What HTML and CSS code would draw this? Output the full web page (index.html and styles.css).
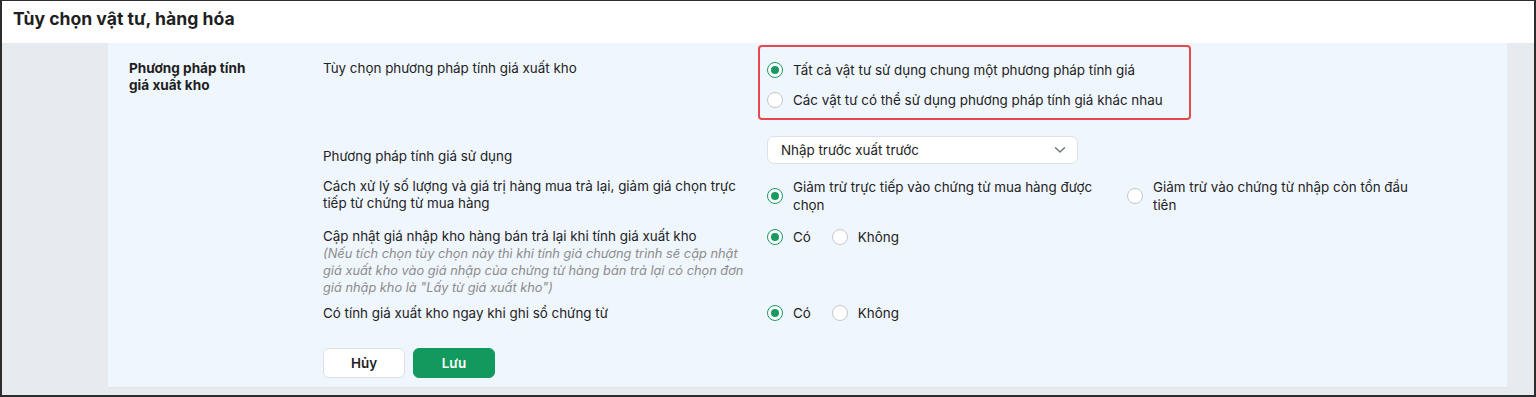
FILE: index.html
```html
<!DOCTYPE html>
<html>
<head>
    <meta charset="UTF-8">
    <title>Tùy chọn vật tư, hàng hóa</title>
    <link rel="stylesheet" href="styles.css">
</head>
<body>
    <div class="frame">
        <div class="header">
            <h1 class="title">Tùy chọn vật tư, hàng hóa</h1>
        </div>

        <div class="content">
            <div class="panel">
                <div class="section-label">Phương pháp tính<br>giá xuất kho</div>

                <div class="section-body">
                    <!-- row 1 -->
                    <div class="row row-method">
                        <div class="desc">Tùy chọn phương pháp tính giá xuất kho</div>
                        <div class="options">
                            <div class="highlight-box">
                                <label class="radio-option">
                                    <span class="radio checked"></span>
                                    <span class="option-text">Tất cả vật tư sử dụng chung một phương pháp tính giá</span>
                                </label>
                                <label class="radio-option">
                                    <span class="radio"></span>
                                    <span class="option-text">Các vật tư có thể sử dụng phương pháp tính giá khác nhau</span>
                                </label>
                            </div>
                        </div>
                    </div>

                    <!-- row 2 -->
                    <div class="row row-select">
                        <div class="desc">Phương pháp tính giá sử dụng</div>
                        <div class="options">
                            <div class="select">
                                <span>Nhập trước xuất trước</span>
                                <svg class="chevron" width="12" height="8" viewBox="0 0 12 8">
                                    <path d="M1.5 1.8 L6 6 L10.5 1.8" fill="none" stroke="#6b7280" stroke-width="1.4" stroke-linecap="round" stroke-linejoin="round"/>
                                </svg>
                            </div>
                        </div>
                    </div>

                    <!-- row 3 -->
                    <div class="row row-return">
                        <div class="desc">Cách xử lý số lượng và giá trị hàng mua trả lại, giảm giá chọn trực tiếp từ chứng từ mua hàng</div>
                        <div class="options options-wide">
                            <label class="radio-option align-center first-choice">
                                <span class="radio checked"></span>
                                <span class="option-text">Giảm trừ trực tiếp vào chứng từ mua hàng được chọn</span>
                            </label>
                            <label class="radio-option align-center second-choice">
                                <span class="radio"></span>
                                <span class="option-text">Giảm trừ vào chứng từ nhập còn tồn đầu tiên</span>
                            </label>
                        </div>
                    </div>

                    <!-- row 4 -->
                    <div class="row row-update">
                        <div class="desc">
                            Cập nhật giá nhập kho hàng bán trả lại khi tính giá xuất kho
                            <div class="note">(Nếu tích chọn tùy chọn này thì khi tính giá chương trình sẽ cập nhật<br>giá xuất kho vào giá nhập của chứng từ hàng bán trả lại có chọn đơn<br>giá nhập kho là "Lấy từ giá xuất kho")</div>
                        </div>
                        <div class="options options-inline">
                            <label class="radio-option">
                                <span class="radio checked"></span>
                                <span class="option-text">Có</span>
                            </label>
                            <label class="radio-option">
                                <span class="radio"></span>
                                <span class="option-text">Không</span>
                            </label>
                        </div>
                    </div>

                    <!-- row 5 -->
                    <div class="row row-instant">
                        <div class="desc">Có tính giá xuất kho ngay khi ghi sổ chứng từ</div>
                        <div class="options options-inline">
                            <label class="radio-option">
                                <span class="radio checked"></span>
                                <span class="option-text">Có</span>
                            </label>
                            <label class="radio-option">
                                <span class="radio"></span>
                                <span class="option-text">Không</span>
                            </label>
                        </div>
                    </div>

                    <div class="actions">
                        <button class="btn btn-cancel">Hủy</button>
                        <button class="btn btn-save">Lưu</button>
                    </div>
                </div>
            </div>
        </div>
    </div>
</body>
</html>
```

FILE: styles.css
```css
body {
    margin: 0;
    padding: 0;
    font-family: Inter, "Noto Sans", sans-serif;
    color: #222;
    font-size: 13.4px;
}

.frame {
    width: 1536px;
    height: 397px;
    box-sizing: border-box;
    border: 2px solid #2d2d2d;
    border-top-width: 1px;
    background-color: #e7eaef;
    display: flex;
    flex-direction: column;
    overflow: hidden;
}

.header {
    height: 42px;
    background-color: #fff;
    padding-left: 11px;
    display: flex;
    align-items: center;
    flex-shrink: 0;
}

.title {
    margin: 0 0 8px 0;
    font-size: 17.6px;
    font-weight: 700;
    color: #1f1f1f;
}

.content {
    padding-left: 106px;
    padding-right: 27px;
}

.panel {
    display: flex;
    background-color: #f0f6fe;
    padding: 2px 0 9px 21px;
    border-bottom: 1px solid #dfe3ea;
}

/* left column */
.section-label {
    width: 194px;
    flex-shrink: 0;
    padding-top: 15px;
    font-size: 13.6px;
    font-weight: 700;
    line-height: 17px;
    color: #1f1f1f;
}

.section-body {
    flex: 1;
    display: flex;
    flex-direction: column;
}

.row {
    display: grid;
    grid-template-columns: 444px 1fr;
}

.desc {
    line-height: 17px;
    padding-right: 20px;
}

.note {
    font-style: italic;
    color: #8c8c8c;
    font-size: 12.8px;
    line-height: 17px;
    white-space: nowrap;
}

/* row spacing */
.row-method .desc {
    padding-top: 15px;
}

.row-select {
    margin-top: 16px;
}

.row-select .desc {
    padding-top: 11px;
    line-height: 18px;
}

.row-return {
    margin-top: 13px;
}

.row-update {
    margin-top: 14px;
}

.row-instant {
    margin-top: 9px;
}

/* radio options */
.radio-option {
    display: flex;
    align-items: flex-start;
    gap: 10px;
    line-height: 18px;
}

.radio-option.align-center {
    align-items: center;
}

.radio {
    width: 16px;
    height: 16px;
    box-sizing: border-box;
    border: 1px solid #c4c7cc;
    border-radius: 50%;
    background-color: #fff;
    flex-shrink: 0;
    margin-top: 1px;
    position: relative;
}

.radio-option.align-center .radio {
    margin-top: 0;
}

.radio.checked {
    border: 1.5px solid #1a9a62;
}

.radio.checked::after {
    content: "";
    position: absolute;
    left: 50%;
    top: 50%;
    width: 8px;
    height: 8px;
    margin: -4px 0 0 -4px;
    border-radius: 50%;
    background-color: #1a9a62;
}

.highlight-box {
    width: 433px;
    box-sizing: border-box;
    margin-left: -9px;
    border: 2px solid #e5484d;
    border-radius: 4px;
    padding: 14px 8px 9px 7px;
    display: flex;
    flex-direction: column;
    gap: 12px;
}

.options-wide {
    display: flex;
}

.first-choice {
    width: 360px;
}

.first-choice .option-text {
    width: 320px;
}

.second-choice .option-text {
    width: 272px;
}

.options-inline {
    display: flex;
    gap: 21px;
}

.row-instant .options-inline {
    margin-top: -1px;
}

/* dropdown */
.select {
    width: 311px;
    height: 28px;
    box-sizing: border-box;
    background-color: #fff;
    border: 1px solid #dde2e8;
    border-radius: 7px;
    padding: 0 11px 0 13px;
    display: flex;
    align-items: center;
    justify-content: space-between;
}

/* buttons */
.actions {
    display: flex;
    gap: 8px;
    margin-top: 26px;
}

.btn {
    width: 82px;
    height: 30px;
    border-radius: 6px;
    font-family: Inter, "Noto Sans", sans-serif;
    font-size: 13.4px;
    font-weight: 600;
    cursor: pointer;
}

.btn-cancel {
    background-color: #fff;
    border: 1px solid #dcdfe4;
    color: #222;
}

.btn-save {
    background-color: #129a5e;
    border: 1px solid #129a5e;
    color: #fff;
}
```
